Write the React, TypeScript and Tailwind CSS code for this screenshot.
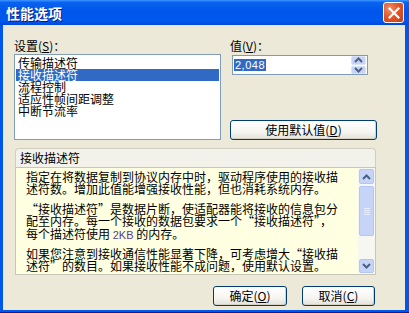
import React from "react";

function Chevron({ up }: { up?: boolean }) {
  return (
    <svg width="9" height="6" viewBox="0 0 9 6">
      {up ? (
        <path d="M1 5 L4.5 1.5 L8 5" stroke="#4D6185" strokeWidth="2" fill="none" />
      ) : (
        <path d="M1 1 L4.5 4.5 L8 1" stroke="#4D6185" strokeWidth="2" fill="none" />
      )}
    </svg>
  );
}

function XpButton({ children, w }: { children: React.ReactNode; w: string }) {
  return (
    <div
      className={`${w} h-[20px] rounded-[3px] border border-[#003C74] bg-[linear-gradient(to_bottom,#ffffff_0%,#f6f5f1_60%,#e3e2da_100%)] flex items-center justify-center text-[12px] leading-[12px] shadow-[inset_-1px_-1px_0_#d6d0c5]`}
    >
      {children}
    </div>
  );
}

export default function App() {
  const items = ["传输描述符", "接收描述符", "流程控制", "适应性帧间距调整", "中断节流率"];
  return (
    <div className="w-[409px] h-[313px] flex flex-col bg-[#0055EA] border-b border-[#001E9A] font-['Noto_Sans_CJK_SC',sans-serif] text-[12px] leading-[12px] text-black overflow-hidden">
      {/* title bar */}
      <div className="h-[25px] flex items-center pl-[6px] pr-[5px] bg-[linear-gradient(to_bottom,#3D95FF_0%,#0A62F0_10%,#0055EA_45%,#0058EE_85%,#0048D8_100%)]">
        <span className="flex-1 text-white font-bold text-[14px] leading-[14px] [text-shadow:1px_1px_0_#0a1883]">
          性能选项
        </span>
        <div className="w-[21px] h-[21px] rounded-[3px] border border-white bg-[radial-gradient(circle_at_30%_30%,#F28C66_0%,#E2582C_45%,#C83C12_100%)] flex items-center justify-center">
          <svg width="12" height="12" viewBox="0 0 12 12">
            <path d="M1.5 1.5 L10.5 10.5 M10.5 1.5 L1.5 10.5" stroke="white" strokeWidth="2.2" strokeLinecap="square" />
          </svg>
        </div>
      </div>

      {/* body */}
      <div className="flex-1 ml-[3px] mr-[4px] mb-[2px] bg-[#ECE9D8] pl-[11px] flex flex-col">
        <div className="flex mt-[15px]">
          <div className="w-[207px] flex flex-col">
            <div className="h-[12px]">
              设置(<span className="underline">S</span>)：
            </div>
            <div className="mt-[2px] h-[86px] border border-[#7F9DB9] bg-white pt-[2px] px-[1px]">
              {items.map((t, i) => (
                <div
                  key={t}
                  className={`h-[12px] leading-[12px] pl-[2px] whitespace-nowrap ${
                    i === 1 ? "bg-[#316AC5] text-white" : ""
                  }`}
                >
                  {t}
                </div>
              ))}
            </div>
          </div>
          <div className="ml-[9px] w-[147px] flex flex-col">
            <div className="h-[12px]">
              值(<span className="underline">V</span>)：
            </div>
            <div className="ml-[2px] mt-[3px] w-[136px] h-[20px] border border-[#7F9DB9] bg-white flex items-center pl-[1px] pr-[1px]">
              <div className="flex-1 flex items-center">
                <span className="bg-[#316AC5] text-white font-['Liberation_Sans',sans-serif] text-[11px] leading-[12px] px-[1px] tracking-[0.5px]">
                  2,048
                </span>
              </div>
              <div className="w-[15px] h-[18px] flex flex-col gap-[1px]">
                <div className="flex-1 rounded-[2px] bg-[#C6D4F7] border border-[#D8E2FA] flex items-center justify-center">
                  <Chevron up />
                </div>
                <div className="flex-1 rounded-[2px] bg-[#C6D4F7] border border-[#D8E2FA] flex items-center justify-center">
                  <Chevron />
                </div>
              </div>
            </div>
            <div className="mt-[45px]">
              <XpButton w="w-[147px]">
                使用默认值(<span className="underline">D</span>)
              </XpButton>
            </div>
          </div>
        </div>

        {/* group */}
        <div className="ml-[1px] mt-[8px] w-[361px] flex flex-col">
          <div className="h-[19px] rounded-t-[4px] border border-b-0 border-[#D0CFC0] bg-[#F3F2EA] pl-[4px] flex items-center">
            接收描述符
          </div>
          <div className="h-[108px] border border-[#C8C7B5] bg-[#FFFFE1] flex">
            <div className="flex-1 pl-[10px] pt-[3px] flex flex-col overflow-hidden whitespace-nowrap leading-[12px]">
              <div className="h-[12px]">指定在将数据复制到协议内存中时，驱动程序使用的接收描</div>
              <div className="h-[12px]">述符数。增加此值能增强接收性能，但也消耗系统内存。</div>
              <div className="h-[12px] mt-[8px]">“接收描述符”是数据片断，使适配器能将接收的信息包分</div>
              <div className="h-[12px]">配至内存。每一个接收的数据包要求一个“接收描述符”，</div>
              <div className="h-[14px] leading-[14px]">
                每个描述符使用 <span className="font-['Liberation_Sans',sans-serif] text-[11px] text-[#5A3C9A]">2KB</span> 的内存。
              </div>
              <div className="h-[12px] mt-[7px]">如果您注意到接收通信性能显著下降，可考虑增大“接收描</div>
              <div className="h-[12px]">述符”的数目。如果接收性能不成问题，使用默认设置。</div>
            </div>
            {/* scrollbar */}
            <div className="w-[17px] bg-[#F7F7F1] flex flex-col pt-[1px] pb-[1px]">
              <div className="h-[15px] mx-[1px] rounded-[2px] bg-[#C6D4F7] border border-[#B4C6F5] flex items-center justify-center">
                <Chevron up />
              </div>
              <div className="mt-[2px] h-[50px] mx-[1px] rounded-[2px] bg-[#C6D4F7] border border-[#B4C6F5] flex flex-col items-center justify-center gap-[1px]">
                <div className="w-[6px] h-[1px] bg-[#E8EEFD]" />
                <div className="w-[6px] h-[1px] bg-[#E8EEFD]" />
                <div className="w-[6px] h-[1px] bg-[#E8EEFD]" />
                <div className="w-[6px] h-[1px] bg-[#E8EEFD]" />
              </div>
              <div className="flex-1" />
              <div className="h-[14px] mx-[1px] rounded-[2px] bg-[#C6D4F7] border border-[#B4C6F5] flex items-center justify-center">
                <Chevron />
              </div>
            </div>
          </div>
        </div>

        {/* bottom buttons */}
        <div className="flex mt-[11px] ml-[199px]">
          <XpButton w="w-[74px]">
            确定(<span className="underline">O</span>)
          </XpButton>
          <div className="ml-[15px]">
            <XpButton w="w-[73px]">
              取消(<span className="underline">C</span>)
            </XpButton>
          </div>
        </div>
      </div>
    </div>
  );
}
